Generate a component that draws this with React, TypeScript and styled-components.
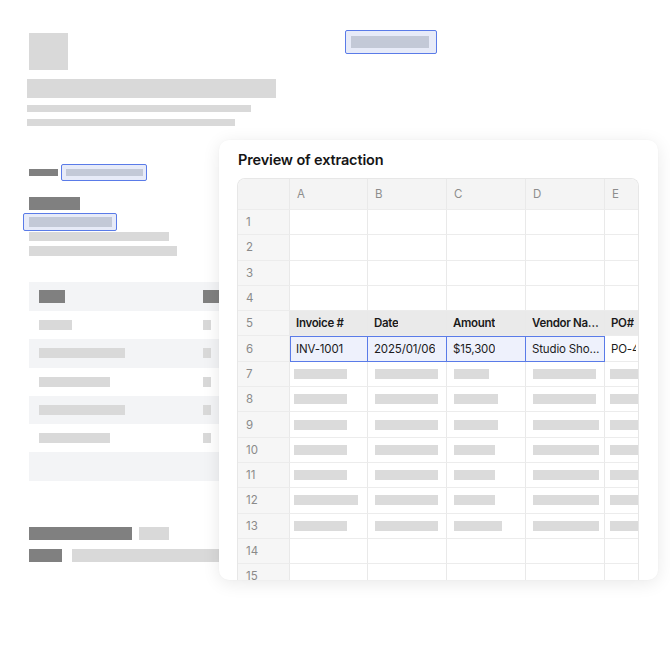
import React from "react";
import styled, { createGlobalStyle, css } from "styled-components";

const Global = createGlobalStyle`
  html, body { margin: 0; padding: 0; background: #ffffff; }
  body { font-family: Inter, "Noto Sans", Arial, sans-serif; }
  * { box-sizing: border-box; }
`;

const Page = styled.div`
  position: relative;
  width: 670px;
  height: 652px;
  overflow: hidden;
  background: #ffffff;
`;

/* ---------- background document ---------- */

const Doc = styled.div`
  display: flex;
  flex-direction: column;
  align-items: flex-start;
  padding: 30px 0 0 27px;
`;

const TopRow = styled.div`
  display: flex;
  justify-content: space-between;
  align-items: flex-start;
  width: 410px;
`;

const Block = styled.div<{ $w: number; $h: number; $tone?: "light" | "dark"; $mt?: number; $ml?: number }>`
  width: ${(p) => p.$w}px;
  height: ${(p) => p.$h}px;
  flex: none;
  background: ${(p) => (p.$tone === "dark" ? "#808080" : "#d9d9d9")};
  margin-top: ${(p) => p.$mt ?? 0}px;
  margin-left: ${(p) => p.$ml ?? 0}px;
`;

const Highlight = styled.div<{ $pad: string; $mt?: number; $ml?: number }>`
  display: flex;
  align-items: center;
  flex: none;
  padding: ${(p) => p.$pad};
  border: 1px solid #5a7be8;
  border-radius: 2px;
  background: #e7ebf8;
  margin-top: ${(p) => p.$mt ?? 0}px;
  margin-left: ${(p) => p.$ml ?? 0}px;
`;

const HighlightBar = styled.div<{ $w: number; $h: number }>`
  width: ${(p) => p.$w}px;
  height: ${(p) => p.$h}px;
  background: #c3c9d7;
`;

const FieldRow = styled.div<{ $mt: number }>`
  display: flex;
  align-items: center;
  gap: 3px;
  margin-top: ${(p) => p.$mt}px;
  margin-left: 2px;
`;

const DocTable = styled.div`
  display: flex;
  flex-direction: column;
  width: 240px;
  margin-top: 26px;
  margin-left: 2px;
`;

const DocRow = styled.div<{ $stripe?: boolean; $head?: boolean }>`
  display: grid;
  grid-template-columns: 164px 1fr;
  align-items: center;
  height: ${(p) => (p.$head ? 29 : 28.3)}px;
  padding-left: 10px;
  background: ${(p) => (p.$stripe || p.$head ? "#f3f4f6" : "transparent")};
`;

const SummaryRow = styled.div<{ $mt: number; $gap: number }>`
  display: flex;
  gap: ${(p) => p.$gap}px;
  margin-top: ${(p) => p.$mt}px;
  margin-left: 2px;
`;

/* ---------- preview card ---------- */

const Card = styled.div`
  position: absolute;
  left: 219px;
  top: 140px;
  width: 439px;
  height: 440px;
  padding: 11px 19px 0 18px;
  background: #ffffff;
  border-radius: 10px;
  box-shadow: 0 3px 18px rgba(0, 0, 0, 0.09), 0 0 2px rgba(0, 0, 0, 0.03);
  overflow: hidden;
`;

const CardTitle = styled.h2`
  margin: 0 0 10px 1px;
  font-family: Inter, "Noto Sans", sans-serif;
  font-size: 14.5px;
  line-height: 17px;
  font-weight: 600;
  color: #151515;
  letter-spacing: -0.15px;
`;

const Sheet = styled.div`
  display: grid;
  grid-template-columns: 52px 78px 79px 79px 79px 1fr;
  grid-template-rows: 31px;
  grid-auto-rows: 25.3px;
  width: 402px;
  border: 1px solid #e7e7e7;
  border-bottom: none;
  border-radius: 8px 8px 0 0;
  overflow: hidden;
  font-family: Inter, "Noto Sans", sans-serif;
`;

type CellKind = "corner" | "colhead" | "rownum" | "label" | "selected" | "data";

const Cell = styled.div<{ $kind: CellKind; $last?: boolean; $first?: boolean }>`
  display: flex;
  align-items: center;
  min-width: 0;
  overflow: hidden;
  white-space: nowrap;
  padding: 0 2px 0 6px;
  font-size: 11.5px;
  letter-spacing: -0.15px;
  color: #1c1c1c;
  background: #ffffff;
  border-right: ${(p) => (p.$last ? "none" : "1px solid #e9e9e9")};
  border-bottom: 1px solid #ececec;

  ${(p) =>
    (p.$kind === "corner" || p.$kind === "colhead") &&
    css`
      background: #f4f4f4;
      color: #8d8d8d;
      letter-spacing: 0;
      padding-left: 7px;
    `}
  ${(p) =>
    p.$kind === "rownum" &&
    css`
      background: #f6f6f6;
      color: #8a8a8a;
      letter-spacing: 0;
      padding-left: 8px;
    `}
  ${(p) =>
    p.$kind === "label" &&
    css`
      background: #eaeaea;
      font-weight: 600;
      letter-spacing: -0.3px;
      color: #1a1a1a;
    `}
  ${(p) =>
    p.$kind === "selected" &&
    css`
      background: #eef1fc;
      border-right-color: #5a7be8;
      border-bottom-color: #5a7be8;
      box-shadow: inset 0 1px 0 #5a7be8 ${p.$first ? ", inset 1px 0 0 #5a7be8" : ""};
    `}
`;

const CellText = styled.span<{ $clip?: boolean }>`
  overflow: hidden;
  text-overflow: ${(p) => (p.$clip ? "clip" : "ellipsis")};
  white-space: nowrap;
`;

const Placeholder = styled.div`
  height: 10px;
  flex: none;
  background: #dbdbdb;
`;

const COLS = ["A", "B", "C", "D", "E"];
const LABELS = ["Invoice #", "Date", "Amount", "Vendor Name", "PO#"];
const VALUES = ["INV-1001", "2025/01/06", "$15,300", "Studio Shoppe Co.", "PO-4521"];
const BAR_ROWS: Record<number, number[]> = {
  7: [53, 63, 35, 63, 40],
  8: [53, 63, 44, 63, 40],
  9: [53, 63, 44, 66, 40],
  10: [53, 63, 41, 66, 40],
  11: [53, 63, 41, 66, 40],
  12: [64, 63, 41, 66, 40],
  13: [53, 63, 48, 66, 40],
};

const docRows = [
  { w: 33, stripe: false },
  { w: 86, stripe: true },
  { w: 71, stripe: false },
  { w: 86, stripe: true },
  { w: 71, stripe: false },
];

function Spreadsheet() {
  const rows: React.ReactNode[] = [];
  rows.push(<Cell key="corner" $kind="corner" />);
  COLS.forEach((c, i) =>
    rows.push(
      <Cell key={`h${c}`} $kind="colhead" $last={i === COLS.length - 1}>
        {c}
      </Cell>
    )
  );
  for (let r = 1; r <= 15; r++) {
    rows.push(
      <Cell key={`n${r}`} $kind="rownum">
        {r}
      </Cell>
    );
    COLS.forEach((c, i) => {
      const last = i === COLS.length - 1;
      if (r === 5) {
        rows.push(
          <Cell key={`${c}${r}`} $kind="label" $last={last}>
            <CellText $clip={last}>{LABELS[i]}</CellText>
          </Cell>
        );
      } else if (r === 6) {
        rows.push(
          <Cell key={`${c}${r}`} $kind={last ? "data" : "selected"} $first={i === 0} $last={last}>
            <CellText $clip={last}>{VALUES[i]}</CellText>
          </Cell>
        );
      } else if (BAR_ROWS[r]) {
        rows.push(
          <Cell key={`${c}${r}`} $kind="data" $last={last} style={{ paddingLeft: i === 0 ? 4 : i === 4 ? 5 : 7 }}>
            <Placeholder style={{ width: BAR_ROWS[r][i] }} />
          </Cell>
        );
      } else {
        rows.push(<Cell key={`${c}${r}`} $kind="data" $last={last} />);
      }
    });
  }
  return <Sheet>{rows}</Sheet>;
}

export default function App() {
  return (
    <Page>
      <Global />
      <Doc>
        <TopRow>
          <Block $w={39} $h={37} $mt={3} $ml={2} />
          <Highlight $pad="5px 7px 5px 5px">
            <HighlightBar $w={78} $h={12} />
          </Highlight>
        </TopRow>
        <Block $w={249} $h={19} $mt={9} />
        <Block $w={224} $h={7} $mt={7} />
        <Block $w={208} $h={7} $mt={7} />

        <FieldRow $mt={38}>
          <Block $w={29} $h={7} $tone="dark" />
          <Highlight $pad="4px 3px 4px 4px">
            <HighlightBar $w={77} $h={7} />
          </Highlight>
        </FieldRow>

        <Block $w={51} $h={13} $tone="dark" $mt={16} $ml={2} />
        <Highlight $pad="3px 4px 3px 5px" $mt={3} $ml={-4}>
          <HighlightBar $w={83} $h={10} />
        </Highlight>
        <Block $w={140} $h={9} $mt={1} $ml={2} />
        <Block $w={148} $h={10} $mt={5} $ml={2} />

        <DocTable>
          <DocRow $head>
            <Block $w={26} $h={13} $tone="dark" />
            <Block $w={26} $h={13} $tone="dark" />
          </DocRow>
          {docRows.map((r, i) => (
            <DocRow key={i} $stripe={r.stripe}>
              <Block $w={r.w} $h={10} />
              <Block $w={8} $h={10} />
            </DocRow>
          ))}
          <DocRow $stripe />
        </DocTable>

        <SummaryRow $mt={46} $gap={7}>
          <Block $w={103} $h={13} $tone="dark" />
          <Block $w={30} $h={13} />
        </SummaryRow>
        <SummaryRow $mt={9} $gap={10}>
          <Block $w={33} $h={13} $tone="dark" />
          <Block $w={180} $h={13} />
        </SummaryRow>
      </Doc>

      <Card>
        <CardTitle>Preview of extraction</CardTitle>
        <Spreadsheet />
      </Card>
    </Page>
  );
}
